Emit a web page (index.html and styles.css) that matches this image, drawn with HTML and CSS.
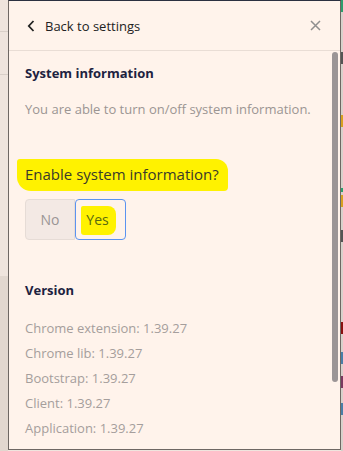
FILE: index.html
```html
<!DOCTYPE html>
<html>

<head>
    <title>System information</title>
    <link rel="stylesheet" href="styles.css">
</head>

<body>
    <div class="page">
        <div class="backdrop">
            <div class="rule rule-1"></div>
            <div class="rule rule-2"></div>
            <div class="lower"></div>
        </div>

        <div class="panel">
            <div class="panel-head">
                <a class="back" href="#">
                    <svg width="8" height="12" viewBox="0 0 8 12">
                        <path d="M6.5 1 L1.8 6 L6.5 11" fill="none" stroke="#222" stroke-width="1.8" />
                    </svg>
                    <span>Back to settings</span>
                </a>
                <svg class="close" width="11" height="11" viewBox="0 0 11 11">
                    <path d="M1 1 L10 10 M10 1 L1 10" stroke="#8f8f8f" stroke-width="1.5" />
                </svg>
            </div>

            <div class="panel-body">
                <h3>System information</h3>
                <p class="muted">You are able to turn on/off system information.</p>

                <p class="question"><span class="marker">Enable system information?</span></p>

                <div class="toggle">
                    <button class="opt">No</button>
                    <button class="opt active"><span class="marker small">Yes</span></button>
                </div>

                <h3 class="version-title">Version</h3>
                <ul class="versions">
                    <li>Chrome extension: 1.39.27</li>
                    <li>Chrome lib: 1.39.27</li>
                    <li>Bootstrap: 1.39.27</li>
                    <li>Client: 1.39.27</li>
                    <li>Application: 1.39.27</li>
                </ul>
            </div>

            <div class="scrollbar"></div>
        </div>

        <div class="edge">
            <i class="mark green"></i>
            <i class="mark dark" style="top: 52px"></i>
            <i class="mark gold" style="top: 115px"></i>
            <i class="mark green" style="top: 188px; height: 4px"></i>
            <i class="mark gold" style="top: 195px"></i>
            <i class="mark dark" style="top: 230px"></i>
            <i class="mark red" style="top: 322px"></i>
            <i class="mark blue" style="top: 352px"></i>
            <i class="mark purple" style="top: 376px"></i>
            <i class="mark blue" style="top: 403px"></i>
        </div>
    </div>
</body>

</html>
```

FILE: styles.css
```css
* {
    box-sizing: border-box;
}

body {
    margin: 0;
    font-family: "Open Sans", "Noto Sans", sans-serif;
    background: #efe5de;
}

.page {
    position: relative;
    width: 343px;
    height: 451px;
    display: flex;
    overflow: hidden;
}

.backdrop {
    width: 8px;
    position: relative;
    background: #efe4dd;
}

.rule {
    position: absolute;
    left: 0;
    width: 8px;
    height: 1px;
    background: #d9cfc8;
}

.rule-1 {
    top: 31px;
}

.rule-2 {
    top: 74px;
}

.lower {
    position: absolute;
    left: 0;
    top: 276px;
    width: 8px;
    bottom: 0;
    background: #e2d7cf;
}

.panel {
    position: relative;
    width: 333px;
    height: 450px;
    background: #fff3eb;
    border-left: 1px solid #6e6763;
    border-right: 1px solid #6e6763;
    border-bottom: 1px solid #6e6763;
    border-top: 1px solid #2b3040;
}

.panel-head {
    height: 50px;
    border-bottom: 1px solid #e9ddd5;
    display: flex;
    align-items: center;
    justify-content: space-between;
    padding: 0 19px 0 18px;
}

.back {
    display: flex;
    align-items: center;
    gap: 10px;
    color: #222;
    text-decoration: none;
    font-size: 13px;
}

.panel-body {
    padding: 13px 16px 0 16px;
}

h3 {
    margin: 0;
    font-size: 13px;
    font-weight: 700;
    color: #1d2240;
}

.muted {
    margin: 18px 0 0;
    font-size: 13px;
    color: #9b9593;
}

.question {
    margin: 46px 0 0;
    font-size: 15px;
    color: #3a3a2a;
}

.marker {
    background: #fff200;
    padding: 5px 9px 7px 8px;
    margin-left: -8px;
    border-radius: 3px 12px 4px 14px;
}

.marker.small {
    padding: 4px 7px 6px 5px;
    margin-left: -4px;
    border-radius: 2px 8px 8px 3px;
}

.toggle {
    display: flex;
    margin-top: 15px;
}

.opt {
    width: 50px;
    height: 41px;
    font-family: inherit;
    font-size: 14px;
    color: #9a9595;
    background: #f3e9e4;
    border: 1px solid #e6dcd6;
    border-radius: 4px 0 0 4px;
}

.opt.active {
    width: 51px;
    color: #5a6a10;
    background: #fff3eb;
    border: 1px solid #5b93f0;
    border-radius: 4px;
}

.version-title {
    margin-top: 41px;
}

.versions {
    list-style: none;
    margin: 17px 0 0;
    padding: 0;
}

.versions li {
    font-size: 13px;
    line-height: 25px;
    color: #a59e9c;
}

.scrollbar {
    position: absolute;
    left: 323px;
    top: 51px;
    width: 6px;
    height: 330px;
    border-radius: 3px;
    background: #9b9596;
}

.edge {
    position: relative;
    flex: 1;
    background: #d8d1cb;
}

.mark {
    position: absolute;
    left: 0;
    top: 0;
    width: 2px;
    height: 12px;
    background: #888;
}

.green {
    background: #2e9e6e;
}

.dark {
    background: #555;
}

.gold {
    background: #d8a020;
}

.red {
    background: #8a1010;
}

.blue {
    background: #4a7fa8;
}

.purple {
    background: #7a3a60;
}
```
